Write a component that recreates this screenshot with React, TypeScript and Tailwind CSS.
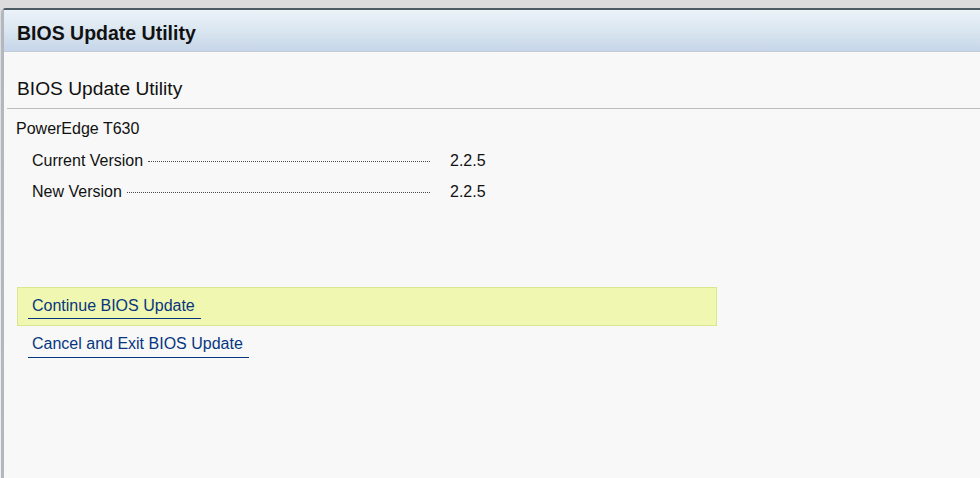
import React from 'react';

const font = { fontFamily: '"Liberation Sans", Arial, sans-serif' };

function VersionRow({ label, value }: { label: string; value: string }) {
  return (
    <div className="flex items-center leading-[20px] h-[20px]">
      <div className="flex items-center w-[398px]">
        <span>{label}</span>
        <div className="flex-1 ml-[5px] mt-[1px] border-t border-dotted border-[#4a4a4a]" />
      </div>
      <span className="ml-[20px]">{value}</span>
    </div>
  );
}

export default function App() {
  return (
    <div className="w-[980px] h-[478px] overflow-hidden bg-gradient-to-b from-[#dcdcdc] to-[#f2f2f2] text-[#111]" style={font}>
      <div className="h-[8px]" />
      <div className="ml-[1px] h-[470px] rounded-tl-[5px] border-l-[3px] border-t-2 border-l-[#b3b7bf] border-t-[#4d5b63] bg-[#f8f8f8] flex flex-col">
        {/* header bar */}
        <div className="h-[42px] shrink-0 flex items-center pl-[13px] bg-gradient-to-b from-[#ecf3f9] via-[#dae6f0] to-[#c6d6e9] border-b border-[#c3cbd6]">
          <span className="text-[19.5px] font-bold leading-[22px] mt-[5px]">BIOS Update Utility</span>
        </div>

        {/* page title */}
        <div className="pt-[26px] pl-[13px] text-[19.2px] leading-[22px]">BIOS Update Utility</div>
        <div className="mt-[8px] ml-[3px] h-px bg-[#bdbdbd]" />

        <div className="mt-[10px] pl-[12px] text-[16px] leading-[20px]">PowerEdge T630</div>

        <div className="mt-[12px] pl-[28px] text-[16px] flex flex-col gap-[11px]">
          <VersionRow label="Current Version" value="2.2.5" />
          <VersionRow label="New Version" value="2.2.5" />
        </div>

        {/* actions */}
        <div className="mt-[85px] ml-[13px] w-[700px] h-[39px] border border-[#dce68e] bg-[#f0f7b0] pl-[10px] pt-[6px]">
          <a className="inline-block pl-[4px] pr-[6px] pb-[2px] leading-[20px] text-[16px] text-[#07367f] border-b border-[#07367f] cursor-pointer">
            Continue BIOS Update
          </a>
        </div>
        <div className="mt-[6px] ml-[24px]">
          <a className="inline-block pl-[4px] pr-[6px] pb-[3px] leading-[20px] text-[16px] text-[#07367f] border-b border-[#07367f] cursor-pointer">
            Cancel and Exit BIOS Update
          </a>
        </div>
      </div>
    </div>
  );
}
